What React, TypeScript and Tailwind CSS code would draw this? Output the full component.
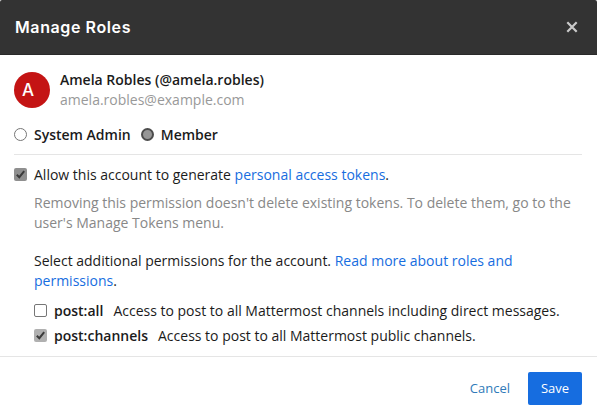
import type { ReactNode } from 'react';

function CheckBox({ checked = false, shade = 'bg-[#8f8f8f]' }: { checked?: boolean; shade?: string }) {
  return (
    <span
      role="checkbox"
      aria-checked={checked}
      className={`mb-px block size-[13px] shrink-0 rounded-[2px] ${checked ? shade : 'border border-[#767676] bg-white'}`}
    >
      {checked && (
        <svg viewBox="0 0 13 13" className="block size-[13px]" fill="none" stroke="#3a3a3a" strokeWidth="2">
          <path d="M2.8 6.8 5.3 9.2 10.2 3.2" />
        </svg>
      )}
    </span>
  );
}

function Radio({ checked = false }: { checked?: boolean }) {
  return (
    <span
      role="radio"
      aria-checked={checked}
      className={`mb-px block size-[13px] shrink-0 rounded-full ${
        checked ? 'border-2 border-[#4c4c4c] bg-[#969696]' : 'border border-[#767676] bg-white'
      }`}
    />
  );
}

function Link({ children }: { children: ReactNode }) {
  return <a className="text-[#166de0]">{children}</a>;
}

function Permission({ name, text, checked = false }: { name: string; text: string; checked?: boolean }) {
  return (
    <div className="flex h-[25px] items-center whitespace-nowrap">
      <CheckBox checked={checked} shade="bg-[#b0b0b0]" />
      <span className="ml-[7px] font-semibold">{name}</span>
      <span className="ml-[10px]">{text}</span>
    </div>
  );
}

export default function App() {
  return (
    <div className="flex h-[419px] w-[597px] flex-col overflow-hidden bg-white font-['Open_Sans','Noto_Sans',sans-serif] text-[14px] leading-5 text-[#1b1b1b]">
      <header className="flex h-[55px] shrink-0 items-center justify-between rounded-t-[2px] border-b border-[#292929] bg-[#333333] pr-[19px] pl-[15px]">
        <h1 className="font-['Inter',sans-serif] text-[16px] font-semibold tracking-[0.6px] text-white">Manage Roles</h1>
        <svg viewBox="0 0 12 12" className="size-3" fill="none" stroke="#cacaca" strokeWidth="2.2">
          <path d="M1.3 1.3 10.7 10.7M10.7 1.3 1.3 10.7" />
        </svg>
      </header>
      <main className="h-[301px] shrink-0 px-[14px] pt-[15px]">
        <div className="flex h-10 items-center">
          <div className="flex size-9 items-center justify-center rounded-full bg-[#c41414] pr-[8px] font-['Inter',sans-serif] text-[17px] font-medium text-white">
            A
          </div>
          <div className="ml-[10px]">
            <div className="font-semibold">Amela Robles (@amela.robles)</div>
            <div className="text-[#999999]">amela.robles@example.com</div>
          </div>
        </div>
        <div className="mt-[15px] flex h-5 items-center font-semibold">
          <Radio />
          <span className="ml-[7px]">System Admin</span>
          <span className="ml-[10px]">
            <Radio checked />
          </span>
          <span className="ml-[7px]">Member</span>
        </div>
        <div className="mt-[9px] mr-[1px] h-px bg-[#e5e5e5]" />
        <div className="mt-[10px] flex h-5 items-center">
          <CheckBox checked />
          <span className="ml-[7px]">
            Allow this account to generate <Link>personal access tokens</Link>.
          </span>
        </div>
        <div className="pl-5">
          <p className="mt-2 text-[#888888]">
            Removing this permission doesn't delete existing tokens. To delete them, go to the
            <br />
            user's Manage Tokens menu.
          </p>
          <p className="mt-[18px]">
            Select additional permissions for the account. <Link>Read more about roles and</Link>
            <br />
            <Link>permissions</Link>.
          </p>
          <div className="mt-[7px]">
            <Permission name="post:all" text="Access to post to all Mattermost channels including direct messages." />
            <Permission
              name="post:channels"
              text="Access to post to all Mattermost public channels."
              checked
            />
          </div>
        </div>
      </main>
      <footer className="flex grow items-start justify-end border-t border-[#e5e5e5] pt-[15px] pr-[15px] text-[13px]">
        <button className="h-[33px] px-[18px] pb-[2px] text-[#2f7ab9]">Cancel</button>
        <button className="h-[33px] w-[54px] rounded-[2px] bg-[#166de0] pb-[2px] text-white">Save</button>
      </footer>
    </div>
  );
}
